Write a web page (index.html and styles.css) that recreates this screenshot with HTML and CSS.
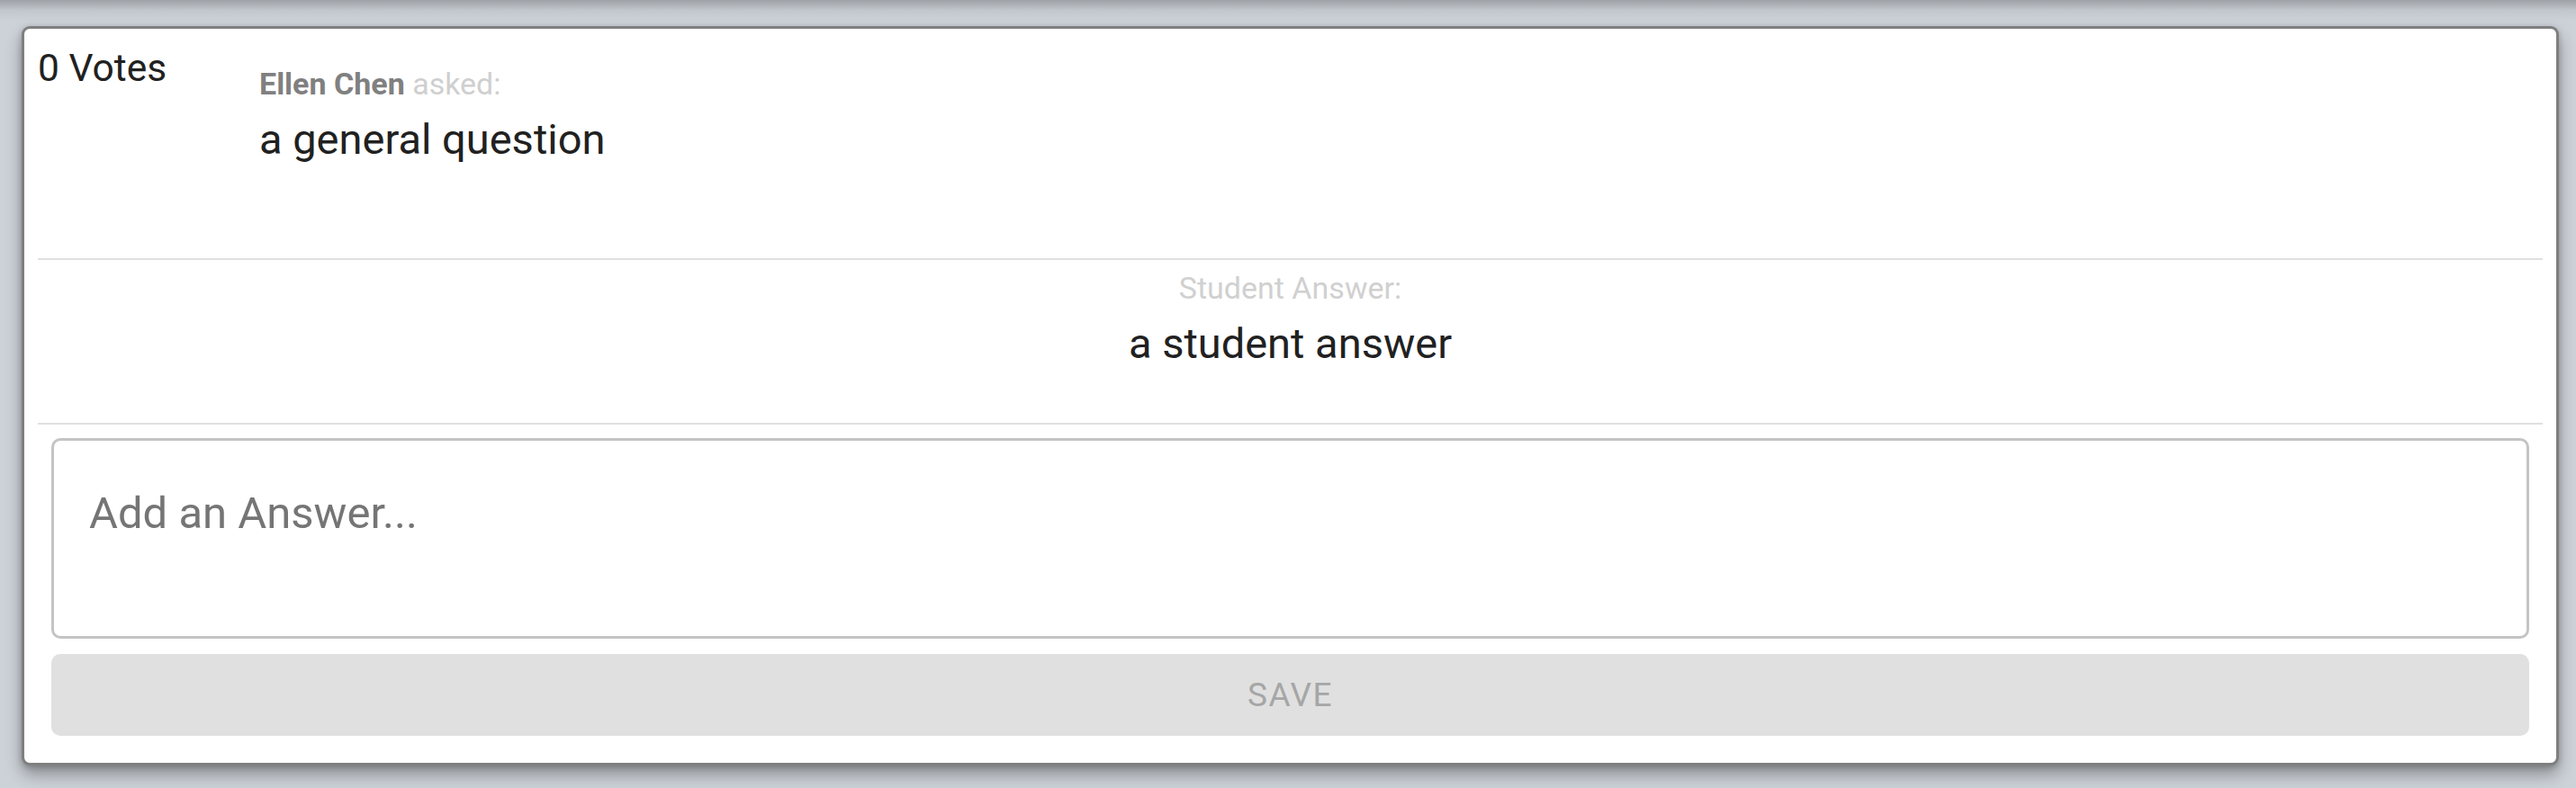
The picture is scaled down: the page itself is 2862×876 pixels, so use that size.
FILE: index.html
```html
<!DOCTYPE html>
<html lang="en">
<head>
<meta charset="utf-8">
<title>Question</title>
<link rel="stylesheet" href="styles.css">
</head>
<body>
<div class="page">
  <div class="card">
    <div class="question-row">
      <div class="votes">0 Votes</div>
      <div class="question">
        <div class="asker"><span class="asker-name">Ellen Chen</span> <span class="asker-verb">asked:</span></div>
        <div class="question-text">a general question</div>
      </div>
    </div>
    <div class="answer-section">
      <div class="answer-label">Student Answer:</div>
      <div class="answer-text">a student answer</div>
    </div>
    <div class="answer-form">
      <textarea class="answer-input" placeholder="Add an Answer..."></textarea>
      <button class="save-btn" type="button" disabled>SAVE</button>
    </div>
  </div>
</div>
</body>
</html>
```
FILE: styles.css
```css
html, body {
  margin: 0;
  padding: 0;
}
body {
  background: #cdd2d8;
  font-family: Roboto, "Noto Sans", "Liberation Sans", sans-serif;
  width: 2862px;
  height: 876px;
  overflow: hidden;
}
.page {
  height: 876px;
  padding: 29px 19px 0 24px;
  box-sizing: border-box;
  background: linear-gradient(to bottom, #9ea2a7 0px, #c3c8ce 12px, #cdd2d8 24px, #cdd2d8 100%);
}
.card {
  background: #ffffff;
  border: 3px solid #7f7f7f;
  border-radius: 9px;
  box-shadow: 0 10px 18px rgba(0, 0, 0, 0.32), 0 2px 6px rgba(0, 0, 0, 0.2);
  padding: 0 15px;
}
.question-row {
  display: flex;
  height: 255px;
  padding-top: 19px;
  box-sizing: border-box;
}
.votes {
  width: 246px;
  flex: none;
  font-size: 42.5px;
  line-height: 50px;
  color: #212121;
}
.question {
  flex: 1;
  padding-top: 24px;
}
.asker {
  font-size: 34px;
  line-height: 36px;
}
.asker-name {
  font-weight: 700;
  color: #808080;
}
.asker-verb {
  color: #cfcfcf;
}
.question-text {
  margin-top: 16px;
  font-size: 47px;
  line-height: 56px;
  color: #212121;
}
.answer-section {
  border-top: 2px solid #e0e0e0;
  border-bottom: 2px solid #e0e0e0;
  height: 181px;
  box-sizing: content-box;
  text-align: center;
}
.answer-label {
  padding-top: 11px;
  font-size: 34px;
  line-height: 40px;
  color: #d0d0d0;
}
.answer-text {
  margin-top: 14px;
  font-size: 47px;
  line-height: 56px;
  color: #212121;
}
.answer-form {
  display: flex;
  flex-direction: column;
  gap: 17px;
  padding: 15px 15px 30px;
}
.answer-input {
  display: block;
  height: 223px;
  box-sizing: border-box;
  border: 3px solid #c4c4c4;
  border-radius: 10px;
  padding: 53px 39px 0;
  font-family: Roboto, "Noto Sans", sans-serif;
  font-size: 49px;
  line-height: 56px;
  color: #212121;
  resize: none;
  outline: none;
  background: #ffffff;
  margin: 0;
}
.answer-input::placeholder {
  color: #757575;
  opacity: 1;
}
.save-btn {
  display: flex;
  align-items: center;
  justify-content: center;
  height: 91px;
  border: none;
  border-radius: 10px;
  background: #e0e0e0;
  color: #a6a6a6;
  font-family: Roboto, "Noto Sans", sans-serif;
  font-size: 37px;
  letter-spacing: 1.5px;
  font-weight: 400;
  padding: 0;
  margin: 0;
}
```
